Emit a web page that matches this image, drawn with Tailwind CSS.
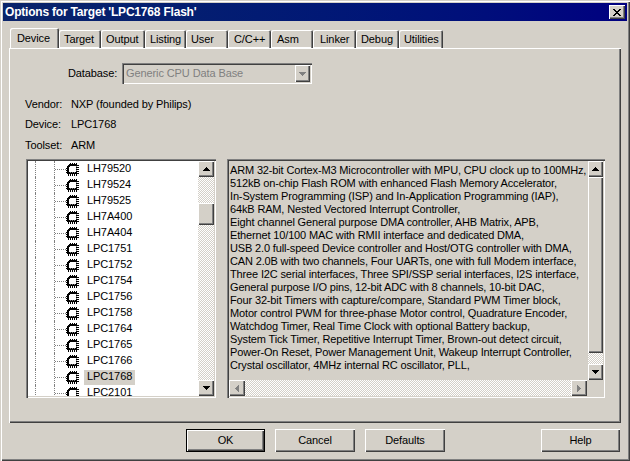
<!DOCTYPE html>
<html lang="en">
    <head>
        <meta charset="UTF-8" />
        <title>Options for Target</title>
        <script src="https://cdn.jsdelivr.net/npm/@tailwindcss/browser@4"></script>
    </head>
    <body class="bg-[#d4d0c8]">
        <div class="w-[630px] h-[461px] overflow-hidden flex flex-col p-[3px] pb-[2px] bg-[#d4d0c8] text-black text-[11px] leading-[13px] tracking-[-0.1px] font-['Liberation_Sans',sans-serif] shadow-[inset_1px_1px_0_#d4d0c8,inset_2px_2px_0_#fff,inset_-1px_-1px_0_#404040,inset_-2px_-2px_0_#808080]">
            <!-- title bar -->
            <div class="h-[18px] shrink-0 flex items-center justify-between pl-[2px] pr-[2px] bg-gradient-to-r from-[#0a246a] to-[#000080]">
                <span class="text-white font-bold text-[12px] tracking-[-0.2px]">Options for Target 'LPC1768 Flash'</span>
                <div class="w-4 h-[14px] flex items-center justify-center bg-[#d4d0c8] shadow-[inset_1px_1px_0_#fff,inset_-1px_-1px_0_#404040,inset_-2px_-2px_0_#808080]">
                    <svg width="8" height="7" viewBox="0 0 8 7" shape-rendering="crispEdges"><path d="M0 0h2v1h1v1h2V1h1V0h2v1H7v1H6v1H5v1h1v1h1v1h1v1H6V6H5V5H3v1H2v1H0V6h1V5h1V4h1V3H2V2H1V1H0z" /></svg>
                </div>
            </div>

            <!-- tabs -->
            <div class="h-[27px] shrink-0 flex items-end pl-[7px]" id="tabs"></div>

            <!-- panel -->
            <div class="ml-[6px] mr-[6px] w-[612px] h-[375px] shrink-0 flex flex-col px-[16px] bg-[#d4d0c8] shadow-[inset_1px_1px_0_#fff,inset_-1px_-1px_0_#404040,inset_-2px_-2px_0_#808080]">
                <div class="flex items-center h-[21px] mt-[15px] pl-[43px]">
                    <span class="w-[54px]">Database:</span>
                    <div class="w-[190px] h-[21px] flex items-center justify-between pl-[4px] pr-[2px] bg-[#d4d0c8] text-[#808080] shadow-[inset_1px_1px_0_#808080,inset_2px_2px_0_#404040,inset_-1px_-1px_0_#fff]">
                        <span>Generic CPU Data Base</span>
                        <div class="w-[15px] h-[17px] flex items-center justify-center shadow-[inset_1px_1px_0_#fff,inset_-1px_-1px_0_#404040,inset_-2px_-2px_0_#808080]">
                            <svg width="7" height="4" viewBox="0 0 7 4" shape-rendering="crispEdges"><path fill="#808080" d="M0 0h7v1H6v1H5v1H4v1H3V3H2V2H1V1H0z" /></svg>
                        </div>
                    </div>
                </div>
                <div class="mt-[13px] flex flex-col gap-[6px]">
                    <div class="flex h-[14px] items-center"><span class="w-[46px]">Vendor:</span><span>NXP (founded by Philips)</span></div>
                    <div class="flex h-[14px] items-center"><span class="w-[46px]">Device:</span><span>LPC1768</span></div>
                    <div class="flex h-[14px] items-center mt-[1px]"><span class="w-[46px]">Toolset:</span><span>ARM</span></div>
                </div>

                <div class="mt-[7px] ml-[1px] flex gap-[11px]">
                    <!-- device tree -->
                    <div class="w-[190px] h-[239px] p-[2px] flex bg-white shadow-[inset_1px_1px_0_#808080,inset_2px_2px_0_#404040,inset_-1px_-1px_0_#fff,inset_-2px_-2px_0_#d4d0c8]">
                        <div class="flex-1 min-w-0 h-[235px] overflow-hidden" id="tree"></div>
                        <div class="w-4 h-[235px] flex flex-col bg-[repeating-conic-gradient(#fff_0_25%,#d4d0c8_0_50%)] bg-[length:2px_2px]">
                            <div class="h-4 shrink-0 flex items-center justify-center bg-[#d4d0c8] shadow-[inset_1px_1px_0_#fff,inset_-1px_-1px_0_#404040,inset_-2px_-2px_0_#808080]">
                                <svg width="7" height="4" viewBox="0 0 7 4" shape-rendering="crispEdges"><path d="M3 0h1v1h1v1h1v1h1v1H0V3h1V2h1V1h1z" /></svg>
                            </div>
                            <div class="h-[22px] mt-[26px] shrink-0 bg-[#d4d0c8] shadow-[inset_1px_1px_0_#fff,inset_-1px_-1px_0_#404040,inset_-2px_-2px_0_#808080]"></div>
                            <div class="mt-auto h-4 shrink-0 flex items-center justify-center bg-[#d4d0c8] shadow-[inset_1px_1px_0_#fff,inset_-1px_-1px_0_#404040,inset_-2px_-2px_0_#808080]">
                                <svg width="7" height="4" viewBox="0 0 7 4" shape-rendering="crispEdges"><path d="M0 0h7v1H6v1H5v1H4v1H3V3H2V2H1V1H0z" /></svg>
                            </div>
                        </div>
                    </div>

                    <!-- description -->
                    <div class="w-[378px] h-[239px] p-[2px] flex flex-col bg-[#d4d0c8] shadow-[inset_1px_1px_0_#808080,inset_2px_2px_0_#404040,inset_-1px_-1px_0_#fff,inset_-2px_-2px_0_#d4d0c8]">
                        <div class="flex h-[219px]">
                            <div class="w-[359px] pt-[3px] pl-[1px] whitespace-nowrap overflow-hidden tracking-[-0.15px]">
                                <p>ARM 32-bit Cortex-M3 Microcontroller with MPU, CPU clock up to 100MHz,</p>
                                <p>512kB on-chip Flash ROM with enhanced Flash Memory Accelerator,</p>
                                <p>In-System Programming (ISP) and In-Application Programming (IAP),</p>
                                <p>64kB RAM, Nested Vectored Interrupt Controller,</p>
                                <p>Eight channel General purpose DMA controller, AHB Matrix, APB,</p>
                                <p>Ethernet 10/100 MAC with RMII interface and dedicated DMA,</p>
                                <p>USB 2.0 full-speed Device controller and Host/OTG controller with DMA,</p>
                                <p>CAN 2.0B with two channels, Four UARTs, one with full Modem interface,</p>
                                <p>Three I2C serial interfaces, Three SPI/SSP serial interfaces, I2S interface,</p>
                                <p>General purpose I/O pins, 12-bit ADC with 8 channels, 10-bit DAC,</p>
                                <p>Four 32-bit Timers with capture/compare, Standard PWM Timer block,</p>
                                <p>Motor control PWM for three-phase Motor control, Quadrature Encoder,</p>
                                <p>Watchdog Timer, Real Time Clock with optional Battery backup,</p>
                                <p>System Tick Timer, Repetitive Interrupt Timer, Brown-out detect circuit,</p>
                                <p>Power-On Reset, Power Management Unit, Wakeup Interrupt Controller,</p>
                                <p>Crystal oscillator, 4MHz internal RC oscillator, PLL,</p>
                            </div>
                            <div class="w-[15px] flex flex-col bg-[repeating-conic-gradient(#fff_0_25%,#d4d0c8_0_50%)] bg-[length:2px_2px]">
                                <div class="h-4 shrink-0 flex items-center justify-center bg-[#d4d0c8] shadow-[inset_1px_1px_0_#fff,inset_-1px_-1px_0_#404040,inset_-2px_-2px_0_#808080]">
                                    <svg width="7" height="4" viewBox="0 0 7 4" shape-rendering="crispEdges"><path d="M3 0h1v1h1v1h1v1h1v1H0V3h1V2h1V1h1z" /></svg>
                                </div>
                                <div class="h-[176px] shrink-0 bg-[#d4d0c8] shadow-[inset_1px_1px_0_#fff,inset_-1px_-1px_0_#404040,inset_-2px_-2px_0_#808080]"></div>
                                <div class="mt-auto h-4 shrink-0 flex items-center justify-center bg-[#d4d0c8] shadow-[inset_1px_1px_0_#fff,inset_-1px_-1px_0_#404040,inset_-2px_-2px_0_#808080]">
                                    <svg width="7" height="4" viewBox="0 0 7 4" shape-rendering="crispEdges"><path d="M0 0h7v1H6v1H5v1H4v1H3V3H2V2H1V1H0z" /></svg>
                                </div>
                            </div>
                        </div>
                        <div class="flex h-4 w-[358px] bg-[repeating-conic-gradient(#fff_0_25%,#d4d0c8_0_50%)] bg-[length:2px_2px] justify-between">
                            <div class="w-4 h-4 flex items-center justify-center bg-[#d4d0c8] shadow-[inset_1px_1px_0_#fff,inset_-1px_-1px_0_#404040,inset_-2px_-2px_0_#808080]">
                                <svg width="4" height="7" viewBox="0 0 4 7" shape-rendering="crispEdges"><path fill="#808080" d="M3 0h1v7H3V6H2V5H1V4H0V3h1V2h1V1h1z" /></svg>
                            </div>
                            <div class="w-4 h-4 flex items-center justify-center bg-[#d4d0c8] shadow-[inset_1px_1px_0_#fff,inset_-1px_-1px_0_#404040,inset_-2px_-2px_0_#808080]">
                                <svg width="4" height="7" viewBox="0 0 4 7" shape-rendering="crispEdges"><path fill="#808080" d="M0 0h1v1h1v1h1v1h1v1H3v1H2v1H1v1H0z" /></svg>
                            </div>
                        </div>
                    </div>
                </div>
            </div>

            <!-- buttons -->
            <div class="h-[23px] mt-[6px] shrink-0 flex pl-[183px] pr-[7px]">
                <button class="w-[79px] h-[23px] bg-[#d4d0c8] shadow-[inset_1px_1px_0_#000,inset_-1px_-1px_0_#000,inset_2px_2px_0_#fff,inset_-2px_-2px_0_#404040,inset_-3px_-3px_0_#808080]">OK</button>
                <button class="ml-[10px] w-[80px] h-[23px] bg-[#d4d0c8] shadow-[inset_1px_1px_0_#fff,inset_-1px_-1px_0_#404040,inset_-2px_-2px_0_#808080]">Cancel</button>
                <button class="ml-[10px] w-[80px] h-[23px] bg-[#d4d0c8] shadow-[inset_1px_1px_0_#fff,inset_-1px_-1px_0_#404040,inset_-2px_-2px_0_#808080]">Defaults</button>
                <button class="ml-auto w-[79px] h-[23px] bg-[#d4d0c8] shadow-[inset_1px_1px_0_#fff,inset_-1px_-1px_0_#404040,inset_-2px_-2px_0_#808080]">Help</button>
            </div>
        </div>

        <script>
            const tabs = [
                ['Device', 'w-[49px] pl-[7px]', true],
                ['Target', 'w-[42px] pl-[5px]'],
                ['Output', 'w-[44px] pl-[5px]'],
                ['Listing', 'w-[41px] pl-[5px]'],
                ['User', 'w-[42px] pl-[5px]'],
                ['C/C++', 'w-[43px] pl-[6px]'],
                ['Asm', 'w-[42px] pl-[6px]'],
                ['Linker', 'w-[43px] pl-[7px]'],
                ['Debug', 'w-[43px] pl-[5px]'],
                ['Utilities', 'w-[44px] pl-[5px]'],
            ];

            const chip = `<svg class="shrink-0" width="13" height="15" viewBox="0 0 13 15" shape-rendering="crispEdges">
                <path fill="#000" d="M3 2h8v10H1V4h1V3h1z" />
                <path fill="#000" d="M4 1h1v1H4zM6 1h1v1H6zM8 1h1v1H8zM10 1h1v1h-1zM11 3h2v1h-2zM11 5h2v1h-2zM11 7h2v1h-2zM11 9h2v1h-2zM11 11h2v1h-2zM0 6h1v1H0zM0 8h1v1H0zM0 10h1v1H0zM2 12h1v2H2zM4 12h1v2H4zM6 12h1v2H6zM8 12h1v2H8zM10 12h1v2h-1z" />
                <path fill="#fff" d="M4 4h6v6H3V5h1z" />
                <path fill="#808080" d="M10 4h1v1h-1zM10 6h1v1h-1zM10 8h1v1h-1zM4 10h1v1H4zM6 10h1v1H6zM8 10h1v1H8z" />
            </svg>`;

            const devices = [
                'LH79520', 'LH79524', 'LH79525', 'LH7A400', 'LH7A404',
                'LPC1751', 'LPC1752', 'LPC1754', 'LPC1756', 'LPC1758',
                'LPC1764', 'LPC1765', 'LPC1766', 'LPC1768', 'LPC2101',
            ];

            document.querySelector('#tabs').innerHTML = tabs.map(([name, width, active]) => {
                if (active) {
                    return `<div class="${width} h-[20px] flex items-center bg-[#d4d0c8] rounded-t-[2px] shadow-[inset_1px_1px_0_#fff,inset_-1px_0_0_#404040,inset_-2px_0_0_#808080]">${name}</div>`;
                }
                return `<div class="${width} h-[18px] flex items-center pt-[1px] bg-[#d4d0c8] rounded-t-[2px] shadow-[inset_1px_1px_0_#fff,inset_-1px_0_0_#404040,inset_-2px_0_0_#808080,inset_0_-1px_0_#fff]">${name}</div>`;
            }).join('');

            document.querySelector('#tree').innerHTML = devices.map((name) => {
                const selected = name === 'LPC1768' ? 'bg-[#d4d0c8]' : '';
                return `<div class="flex h-4 items-center">
                    <span class="ml-[7px] h-4 border-l border-dotted border-[#808080]"></span>
                    <span class="ml-[18px] h-4 border-l border-dotted border-[#808080]"></span>
                    <span class="w-[11px] border-t border-dotted border-[#808080]"></span>
                    ${chip}
                    <span class="ml-[5px] px-[3px] h-[15px] flex items-center pb-[1px] ${selected}">${name}</span>
                </div>`;
            }).join('');
        </script>
    </body>
</html>
